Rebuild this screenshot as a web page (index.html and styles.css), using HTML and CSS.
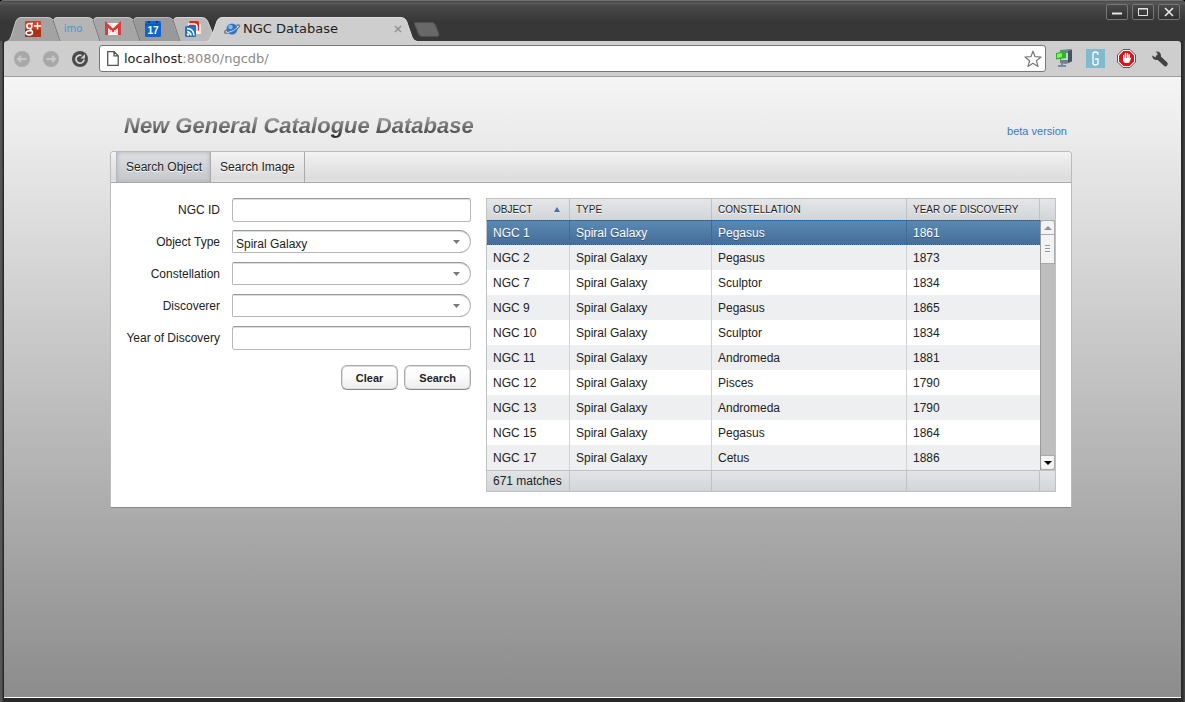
FILE: index.html
```html
<!DOCTYPE html>
<html lang="en">
<head>
<meta charset="utf-8">
<title>NGC Database</title>
<link rel="stylesheet" href="styles.css">
</head>
<body>
<div class="window">
  <header class="titlebar">
    <nav class="tabs" aria-label="Browser tabs">
      <button class="tab" aria-label="Google Plus">
        <svg class="tab-shape" viewBox="0 0 55 24"><path d="M.5 24 Q3 23 4 20 L9 4 Q10.500 .5 14 .5 H41 Q45 .5 46.500 4 L52 20 Q53 23 55 24" fill="#a3a3a3" stroke="#c4c4c4"/></svg>
        <svg class="tab-icon" viewBox="0 0 16 16"><rect width="16" height="16" rx="1" fill="#cf4227"/><path d="M0 8h16v8H0z" fill="#ad3018"/><path d="M8 2.500H4.500C1 2.500 1 7.500 4.500 7.500 7.500 7.500 7.500 3 5 2.500M5 7.500c0 1.500 3 2 2.500 4.300C7 14.500 1 14.500 1 12c0-2 3-2.500 5-2" fill="none" stroke="#fff" stroke-width="1.600"/><path d="M12.500 1.500v7M9 5h7" stroke="#fff" stroke-width="1.500"/></svg>
      </button>
      <button class="tab" aria-label="imo">
        <svg class="tab-shape" viewBox="0 0 55 24"><path d="M13 24 L6.500 4 Q6.500 .5 10 .5 H41 Q45 .5 46.500 4 L52 20 Q53 23 55 24" fill="#b5b5b5" stroke="#cdcdcd"/><path d="M13 24L6 3" stroke="#777"/></svg>
        <span class="imo">imo</span>
      </button>
      <button class="tab" aria-label="Gmail">
        <svg class="tab-shape" viewBox="0 0 55 24"><path d="M13 24 L6.500 4 Q6.500 .5 10 .5 H41 Q45 .5 46.500 4 L52 20 Q53 23 55 24" fill="#a6a6a6" stroke="#c6c6c6"/><path d="M13 24L6 3" stroke="#777"/></svg>
        <svg class="tab-icon" viewBox="0 0 16 16"><rect y="2" width="16" height="12" rx="1" fill="#f5f1f0"/><path d="M1.500 14V3.500L8 9.500l6.500-6V14" fill="none" stroke="#dc3b3a" stroke-width="3"/><path d="M3 13l4-4M13 13L9 9" stroke="#d9c5c3"/></svg>
      </button>
      <button class="tab" aria-label="Calendar">
        <svg class="tab-shape" viewBox="0 0 55 24"><path d="M13 24 L6.500 4 Q6.500 .5 10 .5 H41 Q45 .5 46.500 4 L52 20 Q53 23 55 24" fill="#999" stroke="#b8b8b8"/><path d="M13 24L6 3" stroke="#777"/></svg>
        <svg class="tab-icon" viewBox="0 0 16 16"><rect width="16" height="16" rx="1.500" fill="#0b66d3"/><path d="M0 4h16" stroke="#0850a8"/><path d="M3 0h2v2H3zM11 0h2v2h-2z" fill="#043875"/><text class="day" x="8" y="13" text-anchor="middle">17</text></svg>
      </button>
      <button class="tab" aria-label="Reader">
        <svg class="tab-shape" viewBox="0 0 55 24"><path d="M13 24 L6.500 4 Q6.500 .5 10 .5 H35 Q39 .5 40.500 4 L45.500 16 L42 24" fill="#bababa" stroke="#d5d5d5"/><path d="M13 24L6 3" stroke="#777"/></svg>
        <svg class="tab-icon" viewBox="0 0 16 16"><rect x="7" y="3" width="9" height="10" rx="1" fill="#f3edda"/><rect x="4" width="10" height="10" rx="1.500" fill="#d9281d"/><path d="M3 3h6q3 0 3 3v6" stroke="#fff" stroke-width="1.500" fill="none"/><rect y="5" width="11" height="11" rx="1.500" fill="#1d73cf"/><path d="M2 7.500q6.500 0 7 7M2 10.500q3.500.500 4 4" fill="none" stroke="#fff" stroke-width="1.600"/><circle cx="3" cy="13.500" r="1.200" fill="#fff"/></svg>
      </button>
      <div class="tab tab-current">
        <svg class="tab-shape" viewBox="0 0 212 24"><path d="M0 24.500 Q3 24 4.500 20 L10 4 Q11.500 .5 15 .5 H194 Q198 .5 199.500 4 L205 20 Q206.500 24 210 24.500" fill="#cecece" stroke="#dedede"/></svg>
        <svg class="planet" viewBox="0 0 16 16"><circle cx="8" cy="8" r="5.500" fill="#2874d4"/><circle cx="6.500" cy="6" r="2.300" fill="#83b9f4"/><path d="M3.500 8.200C-.5 10.500-.5 12.500 3 12.200 7 11.700 14 8 15.500 5.500 16.300 4 14.500 3.700 12.500 4.300" fill="none" stroke="#6d7784" stroke-width="1.300"/><path d="M3 11.800Q10 10.500 14.500 5.500" fill="none" stroke="#e3e7eb" stroke-width=".8"/></svg>
        <span class="tab-title">NGC Database</span>
        <button class="tab-close" aria-label="Close tab"><svg viewBox="0 0 8 8"><path d="M1 1l6 6M7 1L1 7" stroke="#919191" stroke-width="1.500"/></svg></button>
      </div>
      <button class="new-tab" aria-label="New tab"><svg viewBox="0 0 26 15"><path d="M1 .5H18Q20.500 .5 21.500 3L25 12Q25.500 14.500 23 14.500H8Q5.500 14.500 4.500 12L.5 2Q.5 .5 1 .5Z" fill="#686868" stroke="#505050"/></svg></button>
    </nav>
    <div class="window-controls">
      <button aria-label="Minimize"><svg viewBox="0 0 20 14"><path d="M5 8.500h10" stroke="#e5e5e5" stroke-width="2"/></svg></button>
      <button aria-label="Maximize"><svg viewBox="0 0 20 14"><path d="M5.500 3.500h9v7h-9zM5 4h10" fill="none" stroke="#e5e5e5"/></svg></button>
      <button aria-label="Close"><svg viewBox="0 0 20 14"><path d="M6 3l8 8M14 3l-8 8" stroke="#e5e5e5" stroke-width="1.700"/></svg></button>
    </div>
  </header>

  <div class="toolbar">
    <button class="nav-button" aria-label="Back"><svg viewBox="0 0 16 16"><circle cx="8" cy="8" r="8" fill="#a8a8a8"/><path d="M12.500 8H4M7 5L4 8l3 3" fill="none" stroke="#c8c8c8" stroke-width="2"/></svg></button>
    <button class="nav-button" aria-label="Forward"><svg viewBox="0 0 16 16"><circle cx="8" cy="8" r="8" fill="#a8a8a8"/><path d="M3.500 8H12M9 5l3 3-3 3" fill="none" stroke="#c8c8c8" stroke-width="2"/></svg></button>
    <button class="nav-button" aria-label="Reload"><svg viewBox="0 0 16 16"><circle cx="8" cy="8" r="8" fill="#4a4a4a"/><path d="M9.500 4.500A4 4 0 1 0 12 8.500" fill="none" stroke="#d2d2d2" stroke-width="1.800"/><path d="M8.500 7.500h4.500V3z" fill="#d2d2d2"/></svg></button>
    <div class="address">
      <svg class="page-icon" viewBox="0 0 12 15"><path d="M.7.700h6.500l4 4v9.600H.7zM7 .7v4.200h4.200" fill="#fff" stroke="#555" stroke-width="1.300"/></svg>
      <div class="url"><span>localhost</span>:8080/ngcdb/</div>
      <button class="star" aria-label="Bookmark"><svg viewBox="0 0 18 18"><path d="M9 1.200l2.100 5.500 5.900.3-4.600 3.700 1.600 5.700L9 13.200l-5 3.200 1.600-5.700L1 7l5.900-.3z" fill="#fff" stroke="#777" stroke-width="1.200" stroke-linejoin="round"/></svg></button>
    </div>
    <div class="extensions">
      <button aria-label="Screen sharing"><svg viewBox="0 0 19 19"><path d="M5 1l11-1q1 0 1 1v11q0 1-1 1l-5 2-6-1z" fill="#71818e"/><path d="M13 2l4-1v11l-4 2z" fill="#435361"/><path d="M6 4h7v7H6z" fill="#c6d1d8"/><path d="M1 4l10-2v7l-10 1.500z" fill="#28b81e"/><path d="M2 5l5-1v4L2 9z" fill="#8ded67"/><path d="M7 14v4M3 17h8" stroke="#718da0" stroke-width="2"/></svg></button>
      <button class="letter-extension" aria-label="G extension"><svg viewBox="0 0 19 19"><path fill="#81b9cf" d="M0 0h19v19H0z"/><path d="M12 6V5q0-2-2.500-2T7 5v9q0 2 2.500 2t2.500-2v-4H9" fill="none" stroke="#fff" stroke-width="1.300"/></svg></button>
      <button aria-label="Ad blocker"><svg viewBox="0 0 19 19"><path d="M6 .5h7L18.500 6v7L13 18.500H6L.5 13V6z" fill="#fff" stroke="#555"/><path d="M6.500 2h6L17 6.500v6L12.500 17h-6L2 12.500v-6z" fill="#df1118"/><path d="M6.700 10V6.500M8.500 9V4.500M10.500 9V4.500M12.200 10V6" stroke="#fff" stroke-width="1.400" stroke-linecap="round"/><path d="M6 9h7l1.500-.5-2.500 5.500H8L6 12z" fill="#fff"/></svg></button>
      <button class="wrench" aria-label="Settings"><svg viewBox="0 0 18 18"><path d="M7 7l7.500 7" stroke="#424242" stroke-width="4.500" stroke-linecap="round"/><path d="M5 1.500Q10 1 10 6 9.500 10.500 5 10 1.500 9.500 1 5.500l4 2 2.500-2z" fill="#424242"/></svg></button>
    </div>
  </div>

  <main class="page">
    <div class="content">
      <div class="heading">
        <h1>New General Catalogue Database</h1>
        <a href="#">beta version</a>
      </div>
      <section class="panel">
        <div class="panel-tabs" role="tablist">
          <button class="panel-tab selected" role="tab" aria-selected="true">Search Object</button>
          <button class="panel-tab" role="tab" aria-selected="false">Search Image</button>
        </div>
        <div class="panel-body">
          <form class="search-form">
            <label for="ngc-id">NGC ID</label>
            <input id="ngc-id" type="text">
            <label for="type">Object Type</label>
            <div class="combo"><select id="type"><option>Spiral Galaxy</option></select><svg viewBox="0 0 7 4"><path d="M0 0h7L3.500 4z" fill="#787878"/></svg></div>
            <label for="constellation">Constellation</label>
            <div class="combo"><select id="constellation"><option></option></select><svg viewBox="0 0 7 4"><path d="M0 0h7L3.500 4z" fill="#787878"/></svg></div>
            <label for="discoverer">Discoverer</label>
            <div class="combo"><select id="discoverer"><option></option></select><svg viewBox="0 0 7 4"><path d="M0 0h7L3.500 4z" fill="#787878"/></svg></div>
            <label for="year">Year of Discovery</label>
            <input id="year" type="text">
            <div class="actions"><button type="reset">Clear</button><button type="button">Search</button></div>
          </form>

          <table class="results">
            <colgroup><col class="col-object"><col class="col-type"><col class="col-constellation"><col><col class="col-scroll"></colgroup>
            <thead><tr><th scope="col"><div class="sorted">OBJECT<svg viewBox="0 0 6 5"><path d="M3 0l3 5H0z" fill="#4a70ab"/></svg></div></th><th scope="col">TYPE</th><th scope="col">CONSTELLATION</th><th scope="col">YEAR OF DISCOVERY</th><td></td></tr></thead>
            <tbody>
              <tr class="selected-row"><td>NGC 1</td><td>Spiral Galaxy</td><td>Pegasus</td><td>1861</td>
                <td class="scroll-cell" rowspan="10"><div class="scrollbar">
                  <button class="scroll-up" aria-label="Scroll up"><svg viewBox="0 0 8 4"><path d="M4 0l4 4H0z" fill="#929292"/></svg></button>
                  <div class="scroll-thumb"><svg viewBox="0 0 5 8"><path d="M0 .5h5M0 3.500h5M0 6.500h5" stroke="#999"/></svg></div>
                  <div class="scroll-track"></div>
                  <button class="scroll-down" aria-label="Scroll down"><svg viewBox="0 0 8 4"><path d="M0 0h8L4 4z" fill="#000"/></svg></button>
                </div></td></tr>
              <tr><td>NGC 2</td><td>Spiral Galaxy</td><td>Pegasus</td><td>1873</td></tr>
              <tr><td>NGC 7</td><td>Spiral Galaxy</td><td>Sculptor</td><td>1834</td></tr>
              <tr><td>NGC 9</td><td>Spiral Galaxy</td><td>Pegasus</td><td>1865</td></tr>
              <tr><td>NGC 10</td><td>Spiral Galaxy</td><td>Sculptor</td><td>1834</td></tr>
              <tr><td>NGC 11</td><td>Spiral Galaxy</td><td>Andromeda</td><td>1881</td></tr>
              <tr><td>NGC 12</td><td>Spiral Galaxy</td><td>Pisces</td><td>1790</td></tr>
              <tr><td>NGC 13</td><td>Spiral Galaxy</td><td>Andromeda</td><td>1790</td></tr>
              <tr><td>NGC 15</td><td>Spiral Galaxy</td><td>Pegasus</td><td>1864</td></tr>
              <tr><td>NGC 17</td><td>Spiral Galaxy</td><td>Cetus</td><td>1886</td></tr>
            </tbody>
            <tfoot><tr><td>671 matches</td><td></td><td></td><td></td><td></td></tr></tfoot>
          </table>
        </div>
      </section>
    </div>
  </main>
</div>
</body>
</html>
```
FILE: styles.css
```css
* { box-sizing: border-box; }
body {
  margin: 0;
  background: #000;
  color: #222;
  font: 12px/16px "Liberation Sans", Arial, sans-serif;
}
button {
  margin: 0;
  padding: 0;
  border: 0;
  background: none;
  color: inherit;
  font: inherit;
}
svg { display: block; overflow: visible; }

.window {
  display: flex;
  flex-direction: column;
  min-height: 100vh;
  padding: 0 4px 4px;
  border-radius: 4px 4px 0 0;
  background: linear-gradient(90deg, #555 0, #555 2px, #292929 3px, #292929 calc(100% - 3px), #484848);
}

/* Title bar and browser tabs */
.titlebar {
  display: flex;
  justify-content: space-between;
  height: 41px;
  margin: 0 -4px;
  border-top: 1px solid #707070;
  border-radius: 4px 4px 0 0;
  background: linear-gradient(#454545, #5a5a5a 2px, #484848 5px, #363636 22px, #383838);
}
.tabs { display: flex; align-items: flex-end; padding-left: 7px; }
.tab {
  position: relative;
  display: flex;
  align-items: center;
  justify-content: center;
  width: 52px;
  height: 24px;
  margin-right: -12px;
}
.tab-shape { position: absolute; top: 0; left: 0; width: 55px; height: 24px; }
.tab-icon, .imo { position: relative; }
.tab-icon { width: 16px; height: 16px; }
.imo { color: #3d9bd7; font: 10px/16px "DejaVu Sans", sans-serif; }
.day { fill: #fff; font: bold 10px "Liberation Sans", Arial, sans-serif; }
.tab-current {
  justify-content: flex-start;
  width: 212px;
  margin-right: 0;
  padding-left: 17px;
  color: #222;
  font: 13px/16px "DejaVu Sans", sans-serif;
}
.tab-current .tab-shape { width: 212px; }
.planet { position: relative; width: 16px; height: 16px; }
.tab-title { position: relative; margin-left: 3px; }
.tab-close { position: relative; margin: 0 17px 0 auto; }
.tab-close svg { width: 8px; height: 8px; }
.new-tab { align-self: flex-end; margin: 0 0 4px -5px; }
.new-tab svg { width: 26px; height: 15px; }
.window-controls { display: flex; gap: 4px; padding: 3px 5px 0 0; }
.window-controls button {
  width: 22px;
  height: 16px;
  border: 1px solid #777;
  border-radius: 2px;
  background: linear-gradient(#494949, #303030);
}

/* Toolbar */
.toolbar {
  display: flex;
  align-items: center;
  height: 36px;
  padding-left: 10px;
  border-bottom: 1px solid #9e9e9e;
  border-radius: 3px 3px 0 0;
  background: #cecece;
}
.nav-button { margin-right: 13px; }
.nav-button svg { width: 16px; height: 16px; }
.address {
  display: flex;
  flex: 1;
  align-items: center;
  height: 27px;
  margin-left: -2px;
  padding: 0 3px 0 7px;
  border: 1px solid #777;
  border-radius: 3px;
  background: #fff;
}
.page-icon { width: 12px; height: 15px; }
.url {
  flex: 1;
  padding-left: 5px;
  color: #8a8a8a;
  font: 13px/20px "DejaVu Sans", sans-serif;
}
.url span { color: #222; }
.star svg { width: 18px; height: 18px; }
.extensions { display: flex; align-items: center; gap: 12px; padding: 0 12px 0 9px; }
.extensions svg { width: 19px; height: 19px; }
.wrench { margin-left: 3px; }
.wrench svg { width: 18px; height: 18px; }

/* Page */
.page {
  flex: 1;
  padding: 34px 3px 34px 0;
  border-bottom: 1px solid #fff;
  background: linear-gradient(#f5f5f5, #8c8c8c);
}
.content { max-width: 962px; margin: 0 auto; }
.heading {
  display: flex;
  align-items: flex-end;
  justify-content: space-between;
  height: 40px;
  padding: 0 5px 11px 14px;
}
h1 {
  margin: 0;
  background: linear-gradient(#aaa 15%, #555 70%, #111);
  background-clip: text;
  color: transparent;
  font: italic bold 22px/28px "Liberation Sans", Arial, sans-serif;
}
.heading a { color: #3b78c4; font-size: 11px; line-height: 18px; text-decoration: none; }

.panel {
  border: 1px solid #bbb;
  border-bottom-color: #888;
  border-radius: 4px 4px 0 0;
  background: #fff;
}
.panel-tabs {
  display: flex;
  height: 31px;
  padding-left: 5px;
  border-bottom: 1px solid #aaa;
  border-radius: 3px 3px 0 0;
  background: linear-gradient(#f3f3f3, #e9e9e9 35%, #dcdcdc 90%, #e2e2e2);
}
.panel-tab {
  padding: 0 9px;
  border-right: 1px solid #aaa;
  text-shadow: 0 1px 0 #fff;
}
.panel-tab.selected {
  padding-right: 8px;
  border-left: 1px solid #b4b8bc;
  background: linear-gradient(#dce0e3, #c3c8cc);
  box-shadow: inset 0 0 4px #aab0b5;
}
.panel-body {
  display: grid;
  grid-template-columns: 345px minmax(0, 1fr);
  gap: 15px;
  align-items: start;
  padding: 15px;
}

/* Search form */
.search-form {
  display: grid;
  grid-template-columns: 94px minmax(0, 1fr);
  gap: 8px 12px;
  align-items: center;
}
label { text-align: right; white-space: nowrap; }
input, select {
  display: block;
  width: 100%;
  height: 24px;
  border: 1px solid #b8b8b8;
  border-top-color: #999;
  border-radius: 3px;
  background: #fff;
  box-shadow: inset 0 1px 0 #ddd;
  color: #222;
  font: inherit;
}
.combo { position: relative; height: 24px; }
select {
  height: 23px;
  padding: 4px 20px 0 3px;
  border-radius: 2px 12px 12px 2px;
  appearance: none;
}
.combo svg { position: absolute; top: 10px; right: 11px; width: 7px; height: 4px; pointer-events: none; }
.actions {
  display: flex;
  grid-column: 1 / -1;
  gap: 6px;
  justify-content: flex-end;
  padding-top: 7px;
}
.actions button {
  height: 25px;
  padding: 0 14px;
  border: 1px solid #aaa;
  border-bottom-color: #888;
  border-radius: 6px;
  background: linear-gradient(#fff, #fafafa 50%, #ececec);
  box-shadow: inset 0 0 0 1px #ddd;
  font: bold 11px/16px "Liberation Sans", Arial, sans-serif;
}

/* Results */
.results {
  width: 100%;
  border: 1px solid #bfc1c3;
  border-spacing: 0;
  table-layout: fixed;
}
.col-object { width: 83px; }
.col-type { width: 142px; }
.col-constellation { width: 195px; }
.col-scroll { width: 15px; }
.results th, .results td {
  height: 25px;
  padding: 0 0 0 6px;
  border-right: 1px solid #d0d2d4;
  text-align: left;
  white-space: nowrap;
}
.results thead th, .results thead td {
  height: 21px;
  border-color: #bfc1c3;
  background: linear-gradient(#e4e6e8, #d2d5d8);
  font-size: 10px;
  font-weight: normal;
  text-shadow: 0 1px 0 #fff;
}
.results thead td { border-right: 0; }
.sorted { display: flex; align-items: center; justify-content: space-between; padding-right: 9px; }
.sorted svg { width: 6px; height: 5px; }
.results tbody tr:nth-child(even) { background: #eeeff1; }
.results tbody td:nth-child(4) { border-right: 0; }
.results .selected-row td:not(.scroll-cell) {
  border-top: 1px dotted #0064c8;
  border-bottom: 1px dotted #0064c8;
  border-right-color: #416b91;
  background: linear-gradient(#598ab2, #476d9b);
  color: #fff;
  text-shadow: 0 1px 0 #335577;
}
.results tfoot td {
  height: 21px;
  border-top: 1px solid #bfc1c3;
  border-right-color: #bfc1c3;
  background: linear-gradient(#e2e4e6, #d2d5d8);
  line-height: 16px;
}
.results tfoot td:last-child { border-right: 0; }
.results .scroll-cell { padding: 0; border: 0; }
.scrollbar {
  display: flex;
  flex-direction: column;
  height: 250px;
  border-left: 1px solid #999;
  background: #bebebe;
}
.scrollbar button, .scroll-thumb {
  display: flex;
  flex: none;
  align-items: center;
  justify-content: center;
  height: 15px;
  border: 1px solid #aaa;
  border-left: 0;
  background: #f3f3f3;
}
.scrollbar .scroll-up { border-radius: 3px 3px 0 0; }
.scrollbar .scroll-down { border-radius: 0 0 3px 3px; }
.scroll-up svg, .scroll-down svg { width: 8px; height: 4px; }
.scrollbar .scroll-thumb { height: 29px; border-top: 0; }
.scroll-thumb svg { width: 5px; height: 8px; }
.scroll-track { flex: 1; }
```
